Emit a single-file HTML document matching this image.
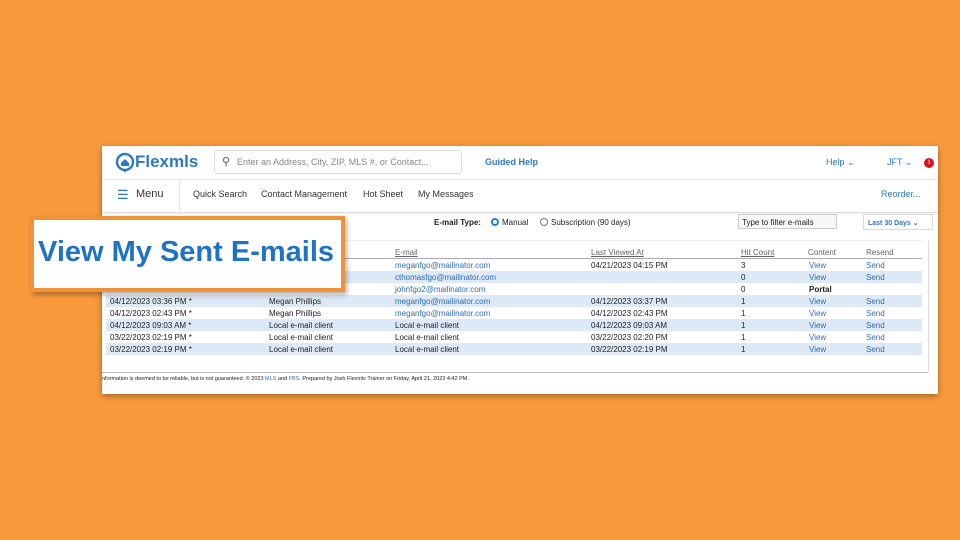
<!DOCTYPE html>
<html><head><style>
*{margin:0;padding:0;box-sizing:border-box}
body{width:960px;height:540px;background:#F89A3C;position:relative;overflow:hidden;font-family:"Liberation Sans",sans-serif}
.a{position:absolute;white-space:nowrap}
.shot{position:absolute;left:102px;top:146px;width:836px;height:248px;background:#fff;box-shadow:0 2px 6px rgba(0,0,0,.35)}
.t{font-size:8px;color:#222}
.l{color:#2f6db3}
.row{position:absolute;left:4px;width:816px;height:12px}
.hd{font-size:8px;color:#666;text-decoration:underline}
</style></head><body>
<div class="shot">
 <div class="a" style="left:0;top:0;width:836px;height:34px;border-bottom:1px solid #e6e6e6"></div>
 <svg class="a" style="left:13px;top:6px" width="20" height="22" viewBox="0 0 20 22"><circle cx="10" cy="10" r="8" fill="none" stroke="#2f78c4" stroke-width="2.4"/><path d="M6 11 L10 7 L14 11 V14 H6Z" fill="#2f78c4"/><path d="M8 17 L10 21 L12 17" fill="#2f78c4"/></svg>
 <div class="a" style="left:33px;top:6px;font-size:17px;font-weight:bold;color:#2f78c4">Flexmls</div>
 <div class="a" style="left:112px;top:4px;width:248px;height:24px;border:1px solid #ddd;border-radius:3px"></div>
 <div class="a" style="left:120px;top:9px;font-size:11px;color:#555">&#9906;</div>
 <div class="a" style="left:135px;top:11px;font-size:9px;color:#888">Enter an Address, City, ZIP, MLS #, or Contact...</div>
 <div class="a" style="left:383px;top:11px;font-size:9px;color:#2f78c4;font-weight:bold">Guided Help</div>
 <div class="a" style="left:724px;top:11px;font-size:9px;color:#2f78c4">Help ⌄</div>
 <div class="a" style="left:785px;top:11px;font-size:9px;color:#2f78c4">JFT ⌄</div>
 <div class="a" style="left:822px;top:12px;width:10px;height:10px;border-radius:50%;background:#d8121b;color:#fff;font-size:6px;text-align:center;line-height:10px">1</div>
 <div class="a" style="left:0;top:34px;width:836px;height:33px;border-bottom:1px solid #ddd;box-shadow:0 1px 2px rgba(0,0,0,.08)"></div>
 <div class="a" style="left:15px;top:41px;font-size:13px;color:#2f78c4">&#9776;</div>
 <div class="a" style="left:34px;top:42px;font-size:11px;color:#333">Menu</div>
 <div class="a" style="left:77px;top:35px;width:1px;height:31px;background:#e3e3e3"></div>
 <div class="a" style="left:91px;top:43px;font-size:9px;color:#333">Quick Search</div>
 <div class="a" style="left:159px;top:43px;font-size:9px;color:#333">Contact Management</div>
 <div class="a" style="left:261px;top:43px;font-size:9px;color:#333">Hot Sheet</div>
 <div class="a" style="left:316px;top:43px;font-size:9px;color:#333">My Messages</div>
 <div class="a" style="left:779px;top:43px;font-size:9px;color:#2f78c4">Reorder...</div>
 <div class="a t" style="left:332px;top:72px;font-weight:bold">E-mail Type:</div>
 <div class="a" style="left:389px;top:72px;width:8px;height:8px;border-radius:50%;border:2px solid #2a7de1"></div>
 <div class="a t" style="left:400px;top:72px">Manual</div>
 <div class="a" style="left:438px;top:72px;width:8px;height:8px;border-radius:50%;border:1px solid #777"></div>
 <div class="a t" style="left:449px;top:72px">Subscription (90 days)</div>
 <div class="a t" style="left:636px;top:68px;width:99px;height:15px;border:1px solid #ccc;background:#f7f7f7;padding:3px 3px">Type to filter e-mails</div>
 <div class="a" style="left:761px;top:68px;width:70px;height:16px;border:1px solid #ddd;font-size:7px;color:#2f78c4;font-weight:bold;padding:4px 4px">Last 30 Days ⌄</div>
 <div class="a" style="left:4px;top:94px;width:816px;height:1px;background:#eee"></div>
 <div class="a hd" style="left:293px;top:102px">E-mail</div>
 <div class="a hd" style="left:489px;top:102px">Last Viewed At</div>
 <div class="a hd" style="left:639px;top:102px">Hit Count</div>
 <div class="a" style="left:706px;top:102px;font-size:8px;color:#666">Content</div>
 <div class="a" style="left:764px;top:102px;font-size:8px;color:#666">Resend</div>
 <div class="a" style="left:4px;top:112px;width:816px;height:1px;background:#aab"></div>
 <div class="a" style="left:4px;top:113px;width:816px;height:96px;font-size:8px;color:#222">
  <div class="row" style="left:0;top:0"></div>
  <div class="row" style="left:0;top:12px;background:#dde9f6"></div>
  <div class="row" style="left:0;top:24px"></div>
  <div class="row" style="left:0;top:36px;background:#dde9f6"></div>
  <div class="row" style="left:0;top:48px"></div>
  <div class="row" style="left:0;top:60px;background:#dde9f6"></div>
  <div class="row" style="left:0;top:72px"></div>
  <div class="row" style="left:0;top:84px;background:#dde9f6"></div>
 </div>
 <div class="a" style="left:8px;top:114px;font-size:8px;color:#222;line-height:12px">
  <br><br><br>04/12/2023 03:36 PM *<br>04/12/2023 02:43 PM *<br>04/12/2023 09:03 AM *<br>03/22/2023 02:19 PM *<br>03/22/2023 02:19 PM *</div>
 <div class="a" style="left:167px;top:114px;font-size:8px;color:#222;line-height:12px">
  <br><br><br>Megan Phillips<br>Megan Phillips<br>Local e-mail client<br>Local e-mail client<br>Local e-mail client</div>
 <div class="a" style="left:293px;top:114px;font-size:8px;color:#222;line-height:12px">
  <span class="l">meganfgo@mailinator.com</span><br><span class="l">cthomasfgo@mailinator.com</span><br><span class="l">johnfgo2@mailinator.com</span><br><span class="l">meganfgo@mailinator.com</span><br><span class="l">meganfgo@mailinator.com</span><br>Local e-mail client<br>Local e-mail client<br>Local e-mail client</div>
 <div class="a" style="left:489px;top:114px;font-size:8px;color:#222;line-height:12px">
  04/21/2023 04:15 PM<br><br><br>04/12/2023 03:37 PM<br>04/12/2023 02:43 PM<br>04/12/2023 09:03 AM<br>03/22/2023 02:20 PM<br>03/22/2023 02:19 PM</div>
 <div class="a" style="left:639px;top:114px;font-size:8px;color:#222;line-height:12px">3<br>0<br>0<br>1<br>1<br>1<br>1<br>1</div>
 <div class="a l" style="left:707px;top:114px;font-size:8px;line-height:12px">View<br>View<br><b style="color:#222">Portal</b><br>View<br>View<br>View<br>View<br>View</div>
 <div class="a l" style="left:764px;top:114px;font-size:8px;line-height:12px">Send<br>Send<br><br>Send<br>Send<br>Send<br>Send<br>Send</div>
 <div class="a" style="left:0;top:226px;width:826px;height:1px;background:#bbb"></div>
 <div class="a" style="left:0;top:230px;font-size:5.5px;color:#222">nformation is deemed to be reliable, but is not guaranteed. © 2023 <span class="l">MLS</span> and <span class="l">FBS</span>. Prepared by Josh Flexmls Trainer on Friday, April 21, 2023 4:42 PM.</div>
 <div class="a" style="left:826px;top:95px;width:1px;height:131px;background:#ddd"></div>
</div>
<div class="a" style="left:30px;top:216px;width:315px;height:76px;background:#fff;border:4px solid #F0923A;box-shadow:2px 3px 5px rgba(0,0,0,.3)"></div>
<div class="a" style="left:38px;top:236px;font-size:29px;font-weight:bold;color:#1f73c2">View My Sent E-mails</div>
</body></html>
